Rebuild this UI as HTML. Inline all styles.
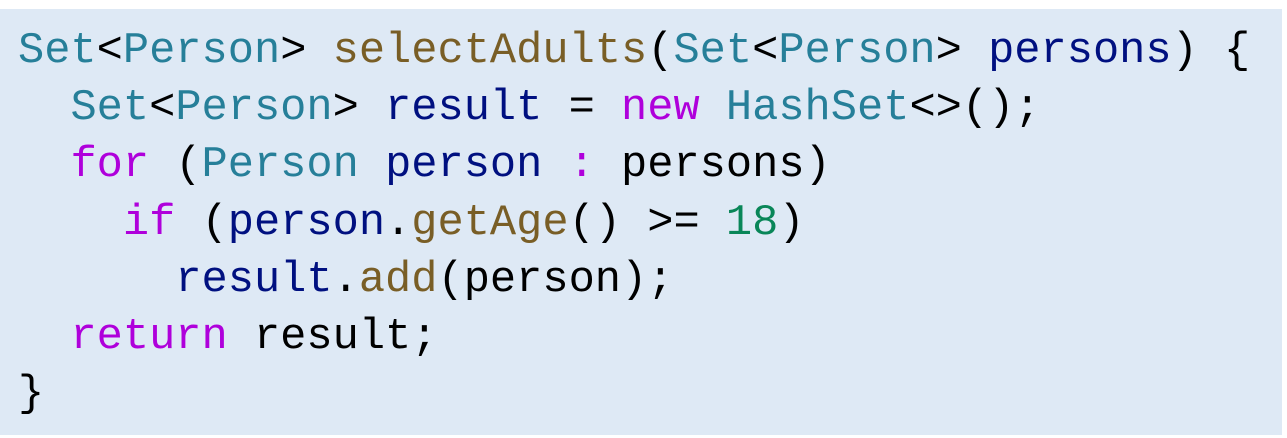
<!DOCTYPE html>
<html><head><style>
html,body{margin:0;padding:0;background:#fff;width:1287px;height:438px;overflow:hidden}
.box{position:absolute;left:0;top:9px;width:1282px;height:426px;background:#dee9f5}
pre{position:absolute;left:18px;top:23px;margin:0;font-family:"Liberation Mono",monospace;font-size:43.7px;line-height:57.2px;color:#000}
.t{color:#267f99}.m{color:#795e26}.v{color:#001080}.k{color:#af00db}.n{color:#098658}
</style></head><body>
<div class="box"></div>
<pre><span class="t">Set</span>&lt;<span class="t">Person</span>&gt; <span class="m">selectAdults</span>(<span class="t">Set</span>&lt;<span class="t">Person</span>&gt; <span class="v">persons</span>) {
  <span class="t">Set</span>&lt;<span class="t">Person</span>&gt; <span class="v">result</span> = <span class="k">new</span> <span class="t">HashSet</span>&lt;&gt;();
  <span class="k">for</span> (<span class="t">Person</span> <span class="v">person</span> <span class="k">:</span> persons)
    <span class="k">if</span> (<span class="v">person</span>.<span class="m">getAge</span>() &gt;= <span class="n">18</span>)
      <span class="v">result</span>.<span class="m">add</span>(person);
  <span class="k">return</span> result;
}</pre>
</body></html>
